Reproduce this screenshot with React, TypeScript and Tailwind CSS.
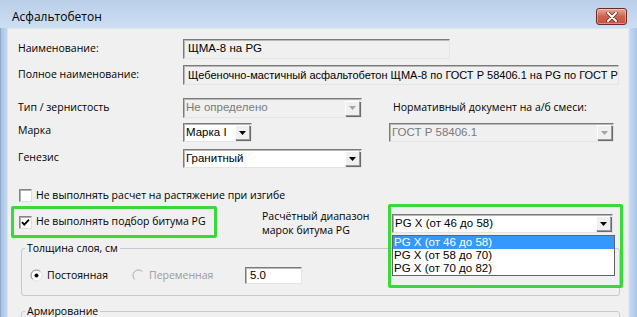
import React from "react";

const UI = "font-['Open_Sans','Noto_Sans',sans-serif]";
const TX = "font-['Liberation_Sans',Arial,sans-serif]";

function Arrow({ disabled }: { disabled?: boolean }) {
  return (
    <svg width="7" height="4" viewBox="0 0 7 4">
      <path d="M0 0h7L3.5 4z" fill={disabled ? "#a3a3a3" : "#000"} />
    </svg>
  );
}

function DropBtn({ disabled }: { disabled?: boolean }) {
  return (
    <div className="ml-auto mr-[1px] flex h-[15px] w-[15px] shrink-0 items-center justify-center border border-t-white border-l-white border-r-[#9a9a9a] border-b-[#9a9a9a] bg-[#f0f0f0] shadow-[1px_1px_0_#6b6b6b]">
      <Arrow disabled={disabled} />
    </div>
  );
}

function Sunken({ className, children }: { className: string; children?: React.ReactNode }) {
  return (
    <div
      className={
        "flex items-center overflow-hidden whitespace-nowrap border border-t-[#7b7b7b] border-l-[#7b7b7b] border-r-[#e4e4e4] border-b-[#e4e4e4] shadow-[inset_1px_1px_0_#b8b8b8] " +
        className
      }
    >
      {children}
    </div>
  );
}

function Check({ checked }: { checked?: boolean }) {
  return (
    <div className="flex h-[13px] w-[13px] shrink-0 items-center justify-center border border-t-[#858585] border-l-[#858585] border-r-[#dedede] border-b-[#dedede] bg-white shadow-[inset_1px_1px_0_#b0b0b0]">
      {checked && (
        <svg width="9" height="9" viewBox="0 0 9 9">
          <path d="M1 4.2L3.3 6.6L8 1.6" stroke="#000" strokeWidth="1.8" fill="none" />
        </svg>
      )}
    </div>
  );
}

function Radio({ checked, disabled }: { checked?: boolean; disabled?: boolean }) {
  return (
    <svg width="13" height="13" viewBox="0 0 13 13" className="shrink-0">
      {!disabled && <circle cx="6.5" cy="6.5" r="5" fill="#fff" />}
      <path
        d="M2.61 10.39 A5.5 5.5 0 0 1 10.39 2.61"
        stroke={disabled ? "#a8a8a8" : "#808080"}
        strokeWidth="1"
        fill="none"
      />
      {!disabled && (
        <path d="M10.39 2.61 A5.5 5.5 0 0 1 2.61 10.39" stroke="#e2e2e2" strokeWidth="1" fill="none" />
      )}
      {checked && <circle cx="6.5" cy="6.5" r="2" fill="#000" />}
    </svg>
  );
}

export default function App() {
  return (
    <div className={"flex h-[317px] w-[637px] flex-col overflow-hidden bg-[#c4d7ed] " + UI}>
      {/* Title bar */}
      <div className="flex h-[28px] shrink-0 items-start justify-between bg-gradient-to-b from-[#b9cfe9] to-[#cddff2]">
        <div className="ml-[12px] mt-[9px] text-[12px] leading-[16px] text-black">Асфальтобетон</div>
        <div className="mr-[10px] mt-[8px] flex h-[17px] w-[31px] items-center justify-center rounded-[3px] border border-[#6e2b22] bg-gradient-to-b from-[#e8a99d] via-[#d0614f] to-[#c8533e] shadow-[inset_0_0_0_1px_rgba(255,255,255,0.35)]">
          <svg width="12" height="10" viewBox="0 0 12 10">
            <path d="M2 1L10 9M10 1L2 9" stroke="#5a2a24" strokeWidth="3.4" strokeLinecap="round" />
            <path d="M2 1L10 9M10 1L2 9" stroke="#fff" strokeWidth="2" strokeLinecap="round" />
          </svg>
        </div>
      </div>

      <div className="flex min-h-0 flex-1">
        {/* left frame */}
        <div className="w-[7px] shrink-0 border-l border-[#8fa9c9] bg-gradient-to-r from-[#aac4e3] to-[#c3d7ee]" />
        {/* content */}
        <div className="flex min-w-0 flex-1 flex-col overflow-hidden border-l border-t border-[#dbe3ec] bg-[#f0f0f0] pl-[10px] text-[10.5px] text-black">
          {/* Row 1 */}
          <div className="mt-[10px] flex h-[20px] shrink-0 items-center">
            <div className="w-[165px] shrink-0">Наименование:</div>
            <Sunken className={"h-[20px] w-[267px] bg-[#f0f0f0] pl-[4px] text-[11.5px] " + TX}>ЩМА-8 на PG</Sunken>
          </div>
          {/* Row 2 */}
          <div className="mt-[6px] flex h-[20px] shrink-0 items-center">
            <div className="w-[165px] shrink-0">Полное наименование:</div>
            <Sunken className={"h-[20px] w-[436px] bg-[#f0f0f0] pl-[4px] text-[11px] " + TX}>
              Щебеночно-мастичный асфальтобетон ЩМА-8 по ГОСТ Р 58406.1 на PG по ГОСТ Р 58406.2
            </Sunken>
          </div>
          {/* Row 3 */}
          <div className="mt-[13px] flex h-[20px] shrink-0 items-center">
            <div className="w-[165px] shrink-0">Тип / зернистость</div>
            <Sunken className={"h-[20px] w-[179px] bg-[#f0f0f0] pl-[2px] text-[11.5px] text-[#7a7a7a] " + TX}>
              Не определено
              <DropBtn disabled />
            </Sunken>
            <div className="ml-[31px]">Нормативный документ на а/б смеси:</div>
          </div>
          {/* Row 4 */}
          <div className="mt-[5px] flex h-[19px] shrink-0 items-center">
            <div className="mb-[3px] w-[165px] shrink-0">Марка</div>
            <Sunken className={"h-[19px] w-[69px] bg-white pl-[2px] text-[11.5px] " + TX}>
              Марка I
              <DropBtn />
            </Sunken>
            <Sunken className={"ml-[137px] h-[19px] w-[225px] bg-[#f0f0f0] pl-[2px] text-[11.5px] text-[#7a7a7a] " + TX}>
              ГОСТ Р 58406.1
              <DropBtn disabled />
            </Sunken>
          </div>
          {/* Row 5 */}
          <div className="mt-[7px] flex h-[19px] shrink-0 items-center">
            <div className="mb-[2px] w-[165px] shrink-0">Генезис</div>
            <Sunken className={"h-[19px] w-[179px] bg-white pl-[2px] text-[11.5px] " + TX}>
              Гранитный
              <DropBtn />
            </Sunken>
          </div>
          {/* Checkbox 1 */}
          <div className="mt-[21px] flex h-[13px] shrink-0 items-center">
            <div className="ml-[1px]">
              <Check />
            </div>
            <div className="ml-[4px]">Не выполнять расчет на растяжение при изгибе</div>
          </div>
          {/* Green row */}
          <div className="relative mt-[4px] flex h-[32px] shrink-0 items-start">
            <div className="-ml-[7px] flex h-[32px] w-[206px] shrink-0 items-center rounded-[2px] border-[3px] border-[#35dc35] pl-[5px]">
              <Check checked />
              <div className="ml-[4px]">Не выполнять подбор битума PG</div>
            </div>
            <div className="ml-[45px] mt-[3px] w-[130px] shrink-0 leading-[14px]">
              Расчётный диапазон
              <br />
              марок битума PG
            </div>
            <Sunken className={"mt-[8px] h-[19px] w-[221px] bg-white pl-[2px] text-[11.5px] " + TX}>
              PG X (от 46 до 58)
              <DropBtn />
            </Sunken>
            {/* overlay highlight */}
            <div className="pointer-events-none absolute left-[370px] top-[-2px] z-10 h-[84px] w-[235px] rounded-[2px] border-[3px] border-[#35dc35]" />
            {/* open dropdown list */}
            <div className={"absolute left-[374px] top-[29px] z-20 flex w-[223px] flex-col border border-[#646464] bg-white text-[11.5px] leading-[13px] " + TX}>
              <div className="bg-[#3399ff] pl-[1px] text-white">PG X (от 46 до 58)</div>
              <div className="pl-[1px]">PG X (от 58 до 70)</div>
              <div className="pl-[1px]">PG X (от 70 до 82)</div>
            </div>
          </div>
          {/* Group 1 */}
          <fieldset className="ml-[3px] mt-[3px] h-[55px] w-[599px] shrink-0 rounded-[3px] border border-[#c3c9ce]">
            <legend className="ml-[3px] px-[2px] leading-[14px]">Толщина слоя, см</legend>
            <div className="mt-[12px] flex h-[17px] items-center pl-[8px]">
              <div className="flex w-[102px] shrink-0 items-center">
                <Radio checked />
                <span className="ml-[4px]">Постоянная</span>
              </div>
              <div className="flex w-[113px] shrink-0 items-center text-[#9a9a9a]">
                <Radio disabled />
                <span className="ml-[4px]">Переменная</span>
              </div>
              <Sunken className={"h-[17px] w-[57px] bg-white pl-[4px] text-[11.5px] " + TX}>5.0</Sunken>
            </div>
          </fieldset>
          {/* Group 2 */}
          <fieldset className="ml-[3px] mt-[8px] h-[40px] w-[599px] shrink-0 rounded-[3px] border border-[#c3c9ce]">
            <legend className="ml-[3px] px-[2px] leading-[14px]">Армирование</legend>
          </fieldset>
        </div>
        {/* right frame */}
        <div className="w-[9px] shrink-0 border-l border-[#e4edf7] bg-gradient-to-r from-[#c9dcf1] to-[#a9c6e6]" />
      </div>
    </div>
  );
}
